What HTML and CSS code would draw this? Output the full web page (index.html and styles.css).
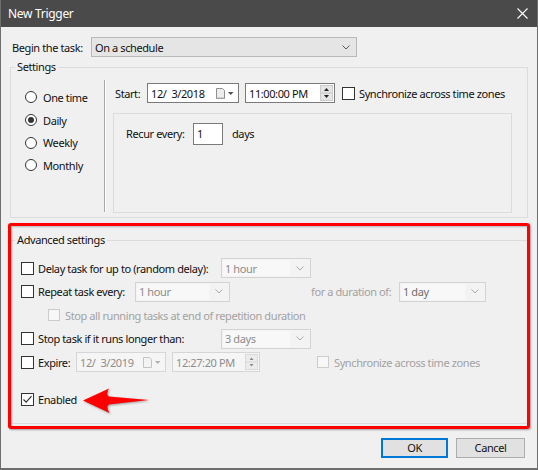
FILE: index.html
```html
<!DOCTYPE html>
<html>
<head>
<meta charset="utf-8">
<title>New Trigger</title>
<link rel="stylesheet" href="styles.css">
</head>
<body>
<div class="window">
  <div class="titlebar">
    <span class="title">New Trigger</span>
    <svg class="close" width="11" height="11" viewBox="0 0 11 11"><path d="M0.5 0.5 L10.5 10.5 M10.5 0.5 L0.5 10.5" stroke="#ffffff" stroke-width="1.1"/></svg>
  </div>
  <div class="content">
    <div class="begin-row">
      <span class="begin-label">Begin the task:</span>
      <div class="combo combo-main">
        <span class="combo-text">On a schedule</span>
        <svg class="chev" width="8" height="5" viewBox="0 0 8 5"><path d="M0.5 0.5 L4 4 L7.5 0.5" fill="none" stroke="#5a5a5a" stroke-width="1"/></svg>
      </div>
    </div>

    <fieldset class="group settings">
      <legend>Settings</legend>
      <div class="settings-body">
        <div class="radios">
          <div class="radio-row"><span class="radio"></span>One time</div>
          <div class="radio-row"><span class="radio on"></span>Daily</div>
          <div class="radio-row"><span class="radio"></span>Weekly</div>
          <div class="radio-row"><span class="radio"></span>Monthly</div>
        </div>
        <div class="divider"></div>
        <div class="schedule">
          <div class="start-row">
            <span class="start-label">Start:</span>
            <div class="field date">
              <span class="field-text">12/  3/2018</span>
              <svg class="cal" width="19" height="11" viewBox="0 0 19 11"><path d="M0.5 0.5 H6.5 L8.5 2.5 V10.5 H0.5 Z" fill="#ededed" stroke="#8f8f8f"/><path d="M1.5 10 H8" stroke="#b5b5b5"/><path d="M12 4 H17.5 L14.75 7 Z" fill="#505050"/></svg>
            </div>
            <div class="field time">
              <span class="field-text">11:00:00 PM</span>
              <svg class="spin" width="13" height="16" viewBox="0 0 13 16"><rect x="0.5" y="0.5" width="12" height="15" fill="#e6e6e6" stroke="#cccccc"/><path d="M1 8 H12" stroke="#c4c4c4"/><path d="M4 6 L6.5 3 L9 6 Z" fill="#222"/><path d="M4 10 L6.5 13 L9 10 Z" fill="#222"/></svg>
            </div>
            <span class="check sync-check"></span>
            <span class="sync-label">Synchronize across time zones</span>
          </div>
          <div class="recur-panel">
            <span class="recur-label">Recur every:</span>
            <div class="field num"><span class="field-text">1</span></div>
            <span class="days">days</span>
          </div>
        </div>
      </div>
    </fieldset>

    <fieldset class="group advanced">
      <legend>Advanced settings</legend>
      <div class="adv-body">
        <div class="adv-row">
          <div class="lead w200"><span class="check"></span><span class="lbl">Delay task for up to (random delay):</span></div>
          <div class="combo combo-dis w90"><span class="combo-text">1 hour</span><svg class="chev" width="8" height="5" viewBox="0 0 8 5"><path d="M0.5 0.5 L4 4 L7.5 0.5" fill="none" stroke="#a8a8a8" stroke-width="1"/></svg></div>
        </div>
        <div class="adv-row">
          <div class="lead w114"><span class="check"></span><span class="lbl">Repeat task every:</span></div>
          <div class="combo combo-dis w95"><span class="combo-text">1 hour</span><svg class="chev" width="8" height="5" viewBox="0 0 8 5"><path d="M0.5 0.5 L4 4 L7.5 0.5" fill="none" stroke="#a8a8a8" stroke-width="1"/></svg></div>
          <span class="dis-label duration">for a duration of:</span>
          <div class="combo combo-dis w87"><span class="combo-text dark">1 day</span><svg class="chev" width="8" height="5" viewBox="0 0 8 5"><path d="M0.5 0.5 L4 4 L7.5 0.5" fill="none" stroke="#a8a8a8" stroke-width="1"/></svg></div>
        </div>
        <div class="adv-row indent">
          <span class="check dis small"></span><span class="dis-label lbl2">Stop all running tasks at end of repetition duration</span>
        </div>
        <div class="adv-row">
          <div class="lead w200"><span class="check"></span><span class="lbl">Stop task if it runs longer than:</span></div>
          <div class="combo combo-dis w90"><span class="combo-text">3 days</span><svg class="chev" width="8" height="5" viewBox="0 0 8 5"><path d="M0.5 0.5 L4 4 L7.5 0.5" fill="none" stroke="#a8a8a8" stroke-width="1"/></svg></div>
        </div>
        <div class="adv-row">
          <div class="lead w55"><span class="check"></span><span class="lbl">Expire:</span></div>
          <div class="field field-dis w90">
            <span class="field-text">12/  3/2019</span>
            <svg class="cal" width="19" height="11" viewBox="0 0 19 11"><path d="M0.5 0.5 H6.5 L8.5 2.5 V10.5 H0.5 Z" fill="#f3f3f3" stroke="#c4c4c4"/><path d="M12 4 H17.5 L14.75 7 Z" fill="#b0b0b0"/></svg>
          </div>
          <div class="field field-dis w88 gap6">
            <span class="field-text">12:27:20 PM</span>
            <svg class="spin" width="13" height="16" viewBox="0 0 13 16"><rect x="0.5" y="0.5" width="12" height="15" fill="#ececec" stroke="#dadada"/><path d="M1 8 H12" stroke="#d6d6d6"/><path d="M4.5 6 L6.5 3.5 L8.5 6 Z" fill="#8a8a8a"/><path d="M4.5 10 L6.5 12.5 L8.5 10 Z" fill="#8a8a8a"/></svg>
          </div>
          <span class="check dis small exp-sync"></span><span class="dis-label lbl3">Synchronize across time zones</span>
        </div>
        <div class="adv-row enabled-row">
          <span class="check checked"><svg width="11" height="11" viewBox="0 0 11 11"><path d="M1.5 5.5 L4.2 8.2 L9.5 2.2" fill="none" stroke="#333333" stroke-width="1.2"/></svg></span><span class="lbl">Enabled</span>
        </div>
      </div>
    </fieldset>

    <div class="buttons">
      <div class="btn btn-ok">OK</div>
      <div class="btn">Cancel</div>
    </div>
  </div>

  <div class="highlight"></div>
  <svg class="arrow" width="70" height="30" viewBox="0 0 70 30"><path d="M1 14.5 L27 2.5 Q23.5 8.5 27 10.5 L67 14 L27 18.5 Q23.5 20.5 27.5 27 Z" fill="#ff0000"/></svg>
</div>
</body>
</html>
```

FILE: styles.css
```css
* { box-sizing: border-box; }

html, body {
  margin: 0;
  padding: 0;
  background: #f0f0f0;
}

body {
  font-family: "Noto Sans", "Open Sans", sans-serif;
  font-size: 11px;
  letter-spacing: -0.4px;
  color: #111111;
}

.window {
  position: relative;
  width: 538px;
  height: 470px;
  background: #f0f0f0;
  border-left: 1px solid #6e6e6e;
  border-right: 1px solid #6e6e6e;
  border-bottom: 2px solid #6e6e6e;
  overflow: hidden;
}

.titlebar {
  height: 27px;
  background: #4a4a4a;
  display: flex;
  align-items: center;
  justify-content: space-between;
  padding: 0 9px 0 7px;
}

.title {
  color: #ffffff;
  font-size: 12px;
  letter-spacing: -0.3px;
}

.close { display: block; margin-top: -1px; }

.content {
  padding: 0 9px;
}

/* begin row */
.begin-row {
  margin-top: 10px;
  height: 20px;
  display: flex;
  align-items: center;
}

.begin-label {
  width: 81px;
  padding-left: 2px;
}

.combo {
  height: 20px;
  display: flex;
  align-items: center;
  justify-content: space-between;
  border: 1px solid #adadad;
  padding: 0 6px 0 3px;
}

.combo-main {
  width: 266px;
  background: #e5e5e5;
  border-color: #b9b9b9;
}

.combo-dis {
  background: #f3f3f3;
  border-color: #d3d3d3;
  color: #8d8d8d;
  padding: 1px 6px 1px 1px;
  align-items: stretch;
}

.combo-dis .combo-text {
  flex: 1;
  background: #f8f8f8;
  padding-left: 2px;
  margin-right: 6px;
  display: flex;
  align-items: center;
}

.combo-dis .chev { align-self: center; }

.combo-text.dark { color: #6e6e6e; }

.chev { display: block; }

/* group boxes */
.group {
  margin: 2px 0 0;
  padding: 0;
  border: 1px solid #dcdcdc;
  min-width: 0;
}

.group legend {
  margin-left: 4px;
  padding: 0 2px;
  line-height: 16px;
}

.settings { padding-bottom: 4px; }

.settings-body {
  display: flex;
  align-items: flex-start;
}

.radios {
  width: 93px;
  padding-top: 11px;
}

.radio-row {
  height: 22.7px;
  display: flex;
  align-items: center;
  padding-left: 14px;
}

.radio {
  width: 12px;
  height: 12px;
  border: 1px solid #333333;
  border-radius: 50%;
  background: #ffffff;
  margin-right: 6px;
  position: relative;
}

.radio.on::after {
  content: "";
  position: absolute;
  left: 2px;
  top: 2px;
  width: 6px;
  height: 6px;
  border-radius: 50%;
  background: #333333;
}

.divider {
  width: 1px;
  height: 132px;
  margin-top: 5px;
  background: #a8a8a8;
  box-shadow: 1px 0 0 #ffffff;
}

.schedule {
  flex: 1;
  display: flex;
  flex-direction: column;
}

.start-row {
  margin-top: 8px;
  height: 20px;
  display: flex;
  align-items: center;
  padding-left: 10px;
}

.start-label { width: 32px; }

.field {
  height: 20px;
  background: #ffffff;
  border: 1px solid #7a7a7a;
  display: flex;
  align-items: center;
  justify-content: space-between;
  padding: 0 2px 0 3px;
}

.field-text { white-space: pre; }

.field.date { width: 92px; margin-right: 6px; padding-right: 3px; }
.field.time { width: 90px; padding-right: 1px; }

.cal, .spin { display: block; }

.check {
  width: 13px;
  height: 13px;
  border: 1px solid #333333;
  background: #ffffff;
  flex: none;
  display: flex;
  align-items: center;
  justify-content: center;
}

.check svg { display: block; }

.check.dis {
  border-color: #cccccc;
  background: #f7f7f7;
}

.check.small { width: 12px; height: 12px; }

.sync-check { margin-left: 7px; }
.sync-label { margin-left: 4px; }

.recur-panel {
  margin: 10px 15px 0 8px;
  height: 100px;
  border: 1px solid #dcdcdc;
  padding: 9px 0 0 12px;
  display: flex;
  align-items: flex-start;
}

.recur-label {
  width: 67px;
  line-height: 22px;
}

.field.num {
  width: 30px;
  height: 22px;
  padding-left: 3px;
  align-items: flex-start;
  padding-top: 2px;
}

.days {
  margin-left: 9px;
  line-height: 22px;
}

/* advanced */
.advanced {
  margin-top: 14px;
  padding-bottom: 12px;
}

.adv-body {
  padding: 8.25px 0 0 10px;
}

.adv-row {
  height: 23.5px;
  display: flex;
  align-items: center;
}

.lead {
  display: flex;
  align-items: center;
  flex: none;
}

.lead .lbl, .enabled-row .lbl { margin-left: 4px; }

.w200 { width: 200px; }
.w114 { width: 114px; }
.w55 { width: 55px; }
.w90 { width: 90px; }
.w95 { width: 95px; }
.w87 { width: 87px; }
.w88 { width: 88px; }
.gap6 { margin-left: 6px; }

.dis-label { color: #a2a2a2; }

.duration {
  margin-left: 81px;
  width: 88px;
}

.indent { padding-left: 27px; }

.lbl2 { margin-left: 5px; }

.field-dis {
  background: #f5f5f5;
  border-color: #d6d6d6;
  color: #8d8d8d;
}

.field-dis.w90 { padding-right: 3px; }
.field-dis.w88 { padding-right: 1px; }

.exp-sync { margin-left: 57px; }
.lbl3 { margin-left: 5px; }

.enabled-row { margin-top: 13.5px; }

/* buttons */
.buttons {
  margin-top: 14px;
  display: flex;
  justify-content: flex-end;
  gap: 8px;
  padding-right: 3px;
}

.btn {
  width: 69px;
  height: 20px;
  background: #e1e1e1;
  border: 1px solid #adadad;
  display: flex;
  align-items: center;
  justify-content: center;
}

.btn-ok {
  width: 67px;
  border: 1px solid #0078d7;
  box-shadow: inset 0 0 0 1px #0078d7;
}

/* annotation overlay */
.highlight {
  position: absolute;
  left: 7px;
  top: 223px;
  width: 522px;
  height: 206px;
  border: 3.5px solid #ff0000;
  border-radius: 3px;
  box-shadow: 1px 1px 2px rgba(0, 0, 0, 0.35), inset 1px 1px 2px rgba(0, 0, 0, 0.25);
}

.arrow {
  position: absolute;
  left: 81px;
  top: 386px;
  display: block;
  filter: drop-shadow(1px 1px 1px rgba(0, 0, 0, 0.35));
}
```
